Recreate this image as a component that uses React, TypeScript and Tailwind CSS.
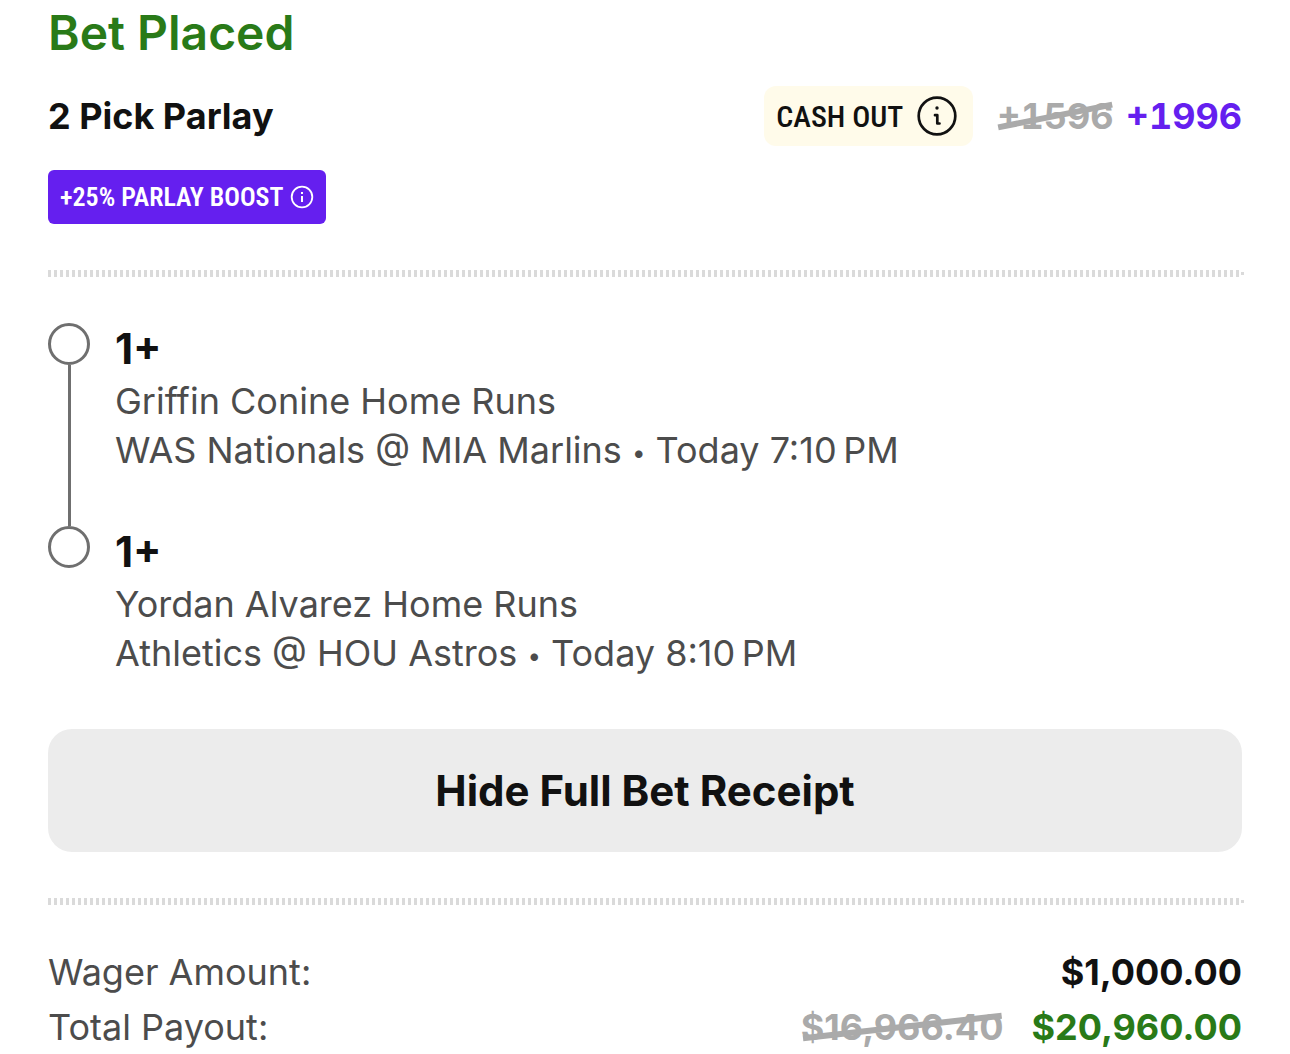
import { useState } from "react";

type Leg = {
    id: number;
    line: string;
    market: string;
    game: string;
    time: string;
};

const legs: Leg[] = [
    {
        id: 1,
        line: "1+",
        market: "Griffin Conine Home Runs",
        game: "WAS Nationals @ MIA Marlins",
        time: "Today 7:10\u202fPM",
    },
    {
        id: 2,
        line: "1+",
        market: "Yordan Alvarez Home Runs",
        game: "Athletics @ HOU Astros",
        time: "Today 8:10\u202fPM",
    },
];

// Ticket style perforation
function Divider() {
    return (
        <div className="-mr-0.5 flex items-center" role="separator">
            <div className="h-[7px] flex-1 bg-[repeating-linear-gradient(90deg,#dadada_0_3px,transparent_3px_6px)]" />
            <div className="size-[3px] bg-[#dadada]" />
        </div>
    );
}

// Old value with a slanted line through it
function Struck({ children }: { children: string }) {
    return (
        <s className="relative inline-block text-[#aaaaaa] no-underline">
            {children}
            <svg className="absolute inset-0 h-full w-full" aria-hidden="true">
                <line x1="1%" y1="71%" x2="99%" y2="29%" stroke="#aaaaaa" strokeWidth="6" />
            </svg>
        </s>
    );
}

function CashOutIcon() {
    return (
        <svg viewBox="0 0 40 40" className="size-10" fill="none" stroke="currentColor" aria-hidden="true">
            <circle cx="20" cy="20" r="18.3" strokeWidth="2.7" />
            <circle cx="20" cy="12" r="1.7" fill="currentColor" stroke="none" />
            <path d="M18 19.2h2.3v8.3h2.2" strokeWidth="2.7" strokeLinecap="round" strokeLinejoin="round" />
        </svg>
    );
}

function BoostIcon() {
    return (
        <svg viewBox="0 0 24 24" className="size-6" fill="none" stroke="currentColor" aria-hidden="true">
            <circle cx="12" cy="12" r="10.3" strokeWidth="1.8" />
            <path d="M12 11v6" strokeWidth="2" />
            <path d="M12 7v2" strokeWidth="2" />
        </svg>
    );
}

export default function App() {
    const [open, setOpen] = useState(true);

    return (
        <main className="bg-white px-12 pt-1 font-['Inter',sans-serif] text-[36px] text-[#111111]">
            <h1 className="text-[48px] leading-[58px] font-semibold text-[#297a18]">Bet Placed</h1>

            <div className="mt-6 flex items-center justify-between">
                <h2 className="font-bold">2 Pick Parlay</h2>
                <div className="flex items-center">
                    <button
                        type="button"
                        className="flex h-[60px] items-center gap-3.5 rounded-xl bg-[#fffbea] pr-4 pl-3 font-['Roboto_Condensed',sans-serif] text-[30px] font-medium"
                    >
                        CASH OUT
                        <CashOutIcon />
                    </button>
                    <div className="ml-6 flex gap-3 font-bold tabular-nums">
                        <Struck>+1596</Struck>
                        <span className="text-[#651fef]">+1996</span>
                    </div>
                </div>
            </div>

            <button
                type="button"
                className="mt-6 flex h-[54px] items-center gap-1.5 rounded-md bg-[#651fef] px-3 font-['Roboto_Condensed',sans-serif] text-[26px] font-semibold text-white"
            >
                +25% PARLAY BOOST
                <BoostIcon />
            </button>

            <div className="mt-[46px]">
                <Divider />
            </div>

            <ol className="mt-[46px]">
                {legs.map((leg, i) => (
                    <li key={leg.id} className="flex gap-[25px]">
                        <div className="flex flex-col items-center">
                            <span className="size-[42px] rounded-full border-3 border-[#6f6f6f]" />
                            {i < legs.length - 1 && <span className="w-[3px] flex-1 bg-[#6f6f6f]" />}
                        </div>
                        <div className="pb-[51px] leading-[49px] text-[#4c4c4c]">
                            <h3 className="mb-0.5 text-[42px] leading-[52px] font-bold text-[#111111]">{leg.line}</h3>
                            <p>{leg.market}</p>
                            <p>
                                {leg.game} <span className="align-middle text-[24px] leading-none">•</span> {leg.time}
                            </p>
                        </div>
                    </li>
                ))}
            </ol>

            <button
                type="button"
                onClick={() => setOpen(!open)}
                aria-expanded={open}
                className="h-[123px] w-full rounded-3xl bg-[#ececec] text-[42px] font-bold"
            >
                {open ? "Hide" : "View"} Full Bet Receipt
            </button>

            {open && (
                <>
                    <div className="mt-[46px]">
                        <Divider />
                    </div>
                    <dl className="mt-10 flex flex-col gap-px leading-[54px]">
                        <div className="flex justify-between">
                            <dt className="text-[#4c4c4c]">Wager Amount:</dt>
                            <dd className="font-bold">$1,000.00</dd>
                        </div>
                        <div className="flex justify-between">
                            <dt className="text-[#4c4c4c]">Total Payout:</dt>
                            <dd className="flex gap-7 font-bold">
                                <Struck>$16,966.40</Struck>
                                <span className="text-[#297a18]">$20,960.00</span>
                            </dd>
                        </div>
                    </dl>
                </>
            )}
        </main>
    );
}
